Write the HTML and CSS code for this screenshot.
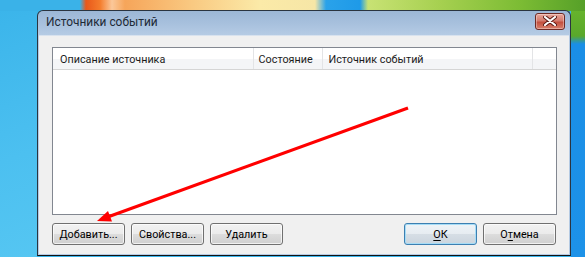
FILE: index.html
```html
<!DOCTYPE html>
<html>
	<head>
		<meta charset="utf-8" />
		<title>Источники событий</title>
		<link rel="stylesheet" href="styles.css">
	</head>
	<body>
		<div id="desktop">
			<div class="window">
				<div class="titlebar">
					<span class="title">Источники событий</span>
					<span class="close">
						<svg width="14" height="10" viewBox="0 0 14 10">
							<path d="M2 1 L12 9 M12 1 L2 9" stroke="#5a1a14" stroke-width="4" stroke-linecap="round" />
							<path d="M2 1 L12 9 M12 1 L2 9" stroke="#fff" stroke-width="2.2" stroke-linecap="round" />
						</svg>
					</span>
				</div>
				<div class="client">
					<div class="listview">
						<div class="header">
							<div class="col col1">Описание источника</div>
							<div class="col col2">Состояние</div>
							<div class="col col3">Источник событий</div>
							<div class="col col4"></div>
						</div>
					</div>
					<div class="buttons">
						<div class="group">
							<button class="btn">Добавить...</button>
							<button class="btn">Свойства...</button>
							<button class="btn">Удалить</button>
						</div>
						<div class="group">
							<button class="btn default"><u>О</u>К</button>
							<button class="btn">О<u>т</u>мена</button>
						</div>
					</div>
				</div>
			</div>
		</div>

		<svg class="arrow" width="585" height="257" viewBox="0 0 585 257">
			<line x1="408" y1="108" x2="109" y2="216.5" stroke="#ff0000" stroke-width="3.2" />
			<polygon points="97,221 108,211 112,221.5" fill="#ff0000" />
		</svg>
	</body>
</html>
```

FILE: styles.css
```css
* {
	margin: 0;
	padding: 0;
	box-sizing: border-box;
}

body {
	width: 585px;
	height: 257px;
	overflow: hidden;
	font-family: Roboto, "Liberation Sans", sans-serif;
	font-size: 10.8px;
	color: #000;
	position: relative;
}

#desktop {
	width: 585px;
	height: 257px;
	padding: 10px 14px 0 37px;
	background:
		linear-gradient(to right, #3ab2e8 0, #3ab2e8 80px, #e8581a 86px, #f47c2c 100px, #fbc89a 112px, #f6a55a 125px, #f9c880 190px, #fbeaa8 260px, #f6e6a6 315px, #2aa2ea 326px, #1e9ae8 360px, #c8e274 368px, #a6d050 440px, #7cbc34 520px, #56a028 585px) top left / 585px 11px no-repeat,
		linear-gradient(to bottom, #6bb82e 0, #5aa82a 36px, #1a8ee6 44px, #1d92e8 100%) right top / 14px 257px no-repeat,
		linear-gradient(160deg, #3ab4ea 0, #4cc0f0 60%, #55c6f2 100%) left top / 37px 257px no-repeat;
	background-color: #3ab4ea;
}

.window {
	width: 534px;
	height: 246px;
	border: 1px solid #2a3440;
	border-bottom-color: #111;
	border-radius: 6px 6px 0 0;
	background: linear-gradient(to bottom, #9cb7d6 0, #a7c0dd 12px, #b5cbe4 24px);
	display: flex;
	flex-direction: column;
	padding: 0 1px 1px 1px;
}

.titlebar {
	height: 24px;
	display: flex;
	align-items: center;
	justify-content: space-between;
	padding: 0 4px 0 7px;
	flex-shrink: 0;
}

.title {
	color: #1e2a36;
	font-size: 11.9px;
	margin-top: -2px;
}

.close {
	width: 30px;
	height: 17px;
	margin-top: -4px;
	border: 1px solid #6e2a24;
	border-radius: 3px;
	background: linear-gradient(to bottom, #e8a69a 0, #d47a6c 45%, #c3503e 55%, #d8806c 100%);
	display: flex;
	align-items: center;
	justify-content: center;
	box-shadow: inset 0 0 0 1px rgba(255, 255, 255, 0.35);
}

.client {
	flex: 1;
	background: #f0f0f0;
	border-top: 1px solid #d8e2ee;
	padding: 11px 12px 0 13px;
	display: flex;
	flex-direction: column;
}

.listview {
	height: 168px;
	border: 1px solid #828790;
	background: #fff;
}

.header {
	height: 22px;
	display: flex;
	background: linear-gradient(to bottom, #fff 0, #fff 50%, #f4f5f7 52%, #f4f5f7 100%);
	border-bottom: 1px solid #d5d5d5;
}

.col {
	padding: 5px 0 0 7px;
	border-right: 1px solid #e3e4e6;
	color: #1c1c1c;
	white-space: nowrap;
}

.col1 {
	width: 201px;
}

.col2 {
	width: 70px;
	padding-left: 5px;
}

.col3 {
	width: 210px;
	padding-left: 5px;
}

.col4 {
	width: 23px;
	border-right: none;
}

.buttons {
	display: flex;
	justify-content: space-between;
	margin-top: 8px;
	padding-right: 1px;
}

.group {
	display: flex;
	gap: 6px;
}

.btn {
	width: 73px;
	height: 22px;
	font-family: inherit;
	font-size: 10.8px;
	color: #000;
	border: 1px solid #707070;
	border-radius: 3px;
	background: linear-gradient(to bottom, #f2f2f2 0, #ebebeb 50%, #dddddd 51%, #cfcfcf 100%);
	box-shadow: inset 0 0 0 1px rgba(255, 255, 255, 0.7);
}

.btn u {
	text-decoration: underline;
	text-underline-offset: 2px;
}

.btn.default {
	border-color: #3c7fb1;
	box-shadow: inset 0 0 0 1px #a6dcf6;
	background: linear-gradient(to bottom, #eef3f7 0, #e6ecf1 50%, #d6dee5 51%, #cbd5de 100%);
}

.arrow {
	position: absolute;
	left: 0;
	top: 0;
	pointer-events: none;
}
```
